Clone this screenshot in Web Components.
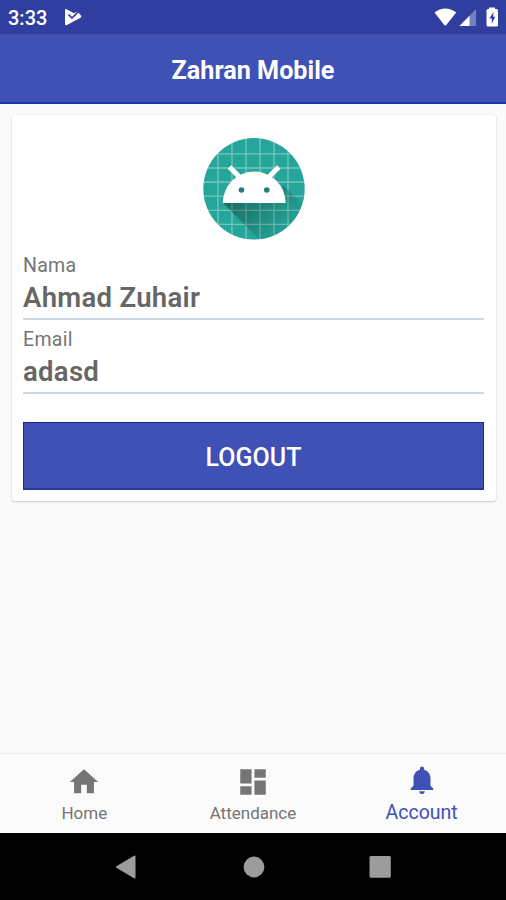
<!DOCTYPE html>
<html lang="id">
<head>
    <meta charset="UTF-8">
    <meta name="viewport" content="width=device-width, initial-scale=1.0">
    <title>Zahran Mobile</title>
    <style>
        body {
            margin: 0;
            font-family: Roboto, "Liberation Sans", sans-serif;
            --primary: #4051b5;
            --primary-dark: #303f9f;
            --surface: #fafafa;
        }
    </style>
</head>
<body>
    <m-screen>
        <m-status-bar slot="top" time="3:33"></m-status-bar>
        <m-toolbar slot="top">Zahran Mobile</m-toolbar>
        <m-card>
            <m-avatar></m-avatar>
            <m-field label="Nama">Ahmad Zuhair</m-field>
            <m-field label="Email">adasd</m-field>
            <m-button>LOGOUT</m-button>
        </m-card>
        <m-tabs slot="bottom">
            <m-tab icon="home">Home</m-tab>
            <m-tab icon="dashboard">Attendance</m-tab>
            <m-tab icon="bell" active>Account</m-tab>
        </m-tabs>
        <m-system-nav slot="bottom"></m-system-nav>
    </m-screen>
    <script>
        class Base extends HTMLElement {
            constructor(...args) {
                super(...args)

                this.attachShadow({ mode: 'open' })
                this.shadowRoot.innerHTML = this.render()
            }
            render() {
                return '<slot></slot>'
            }
        }

        self.customElements.define('m-screen', class Screen extends Base {
            render() {
                return /* HTML */`
                    <style>
                        :host {
                            display: flex;
                            flex-direction: column;
                            height: 900px;
                            background: var(--surface);
                            overflow: hidden;
                        }
                        main {
                            flex: 1;
                            padding: 11px 10.5px 0 11.5px;
                        }
                    </style>
                    <slot name="top"></slot>
                    <main><slot></slot></main>
                    <slot name="bottom"></slot>
                `
            }
        })

        self.customElements.define('m-status-bar', class StatusBar extends Base {
            render() {
                return /* HTML */`
                    <style>
                        :host {
                            display: flex;
                            align-items: center;
                            box-sizing: border-box;
                            height: 34px;
                            padding: 0 7px 0 8px;
                            background: var(--primary-dark);
                            color: #fff;
                            font-size: 20px;
                            font-weight: 500;
                        }
                        svg {
                            display: block;
                        }
                        span {
                            padding-top: 2px;
                        }
                        .note {
                            margin-left: 16px;
                            flex: 1;
                        }
                    </style>
                    <span>${this.getAttribute('time')}</span>
                    <div class="note">
                        <svg width="20" height="20" viewBox="0 0 20 20">
                            <path fill="#fff" d="M2 3Q2 1.500 3.500 2.300L11 6.200L14.500 4.500L18.300 9Q18.500 10 17.500 10.700L3.500 18.200Q2 18.700 2 17.200Z"/>
                            <path fill="none" stroke="#303f9f" stroke-width="1.700" d="M5.500 7.500L9 11L16.500 3.500"/>
                        </svg>
                    </div>
                    <svg width="65" height="34" viewBox="434 0 65 34">
                        <path fill="#fff" d="M434.500 12.500Q445.300 4.500 456.200 12.500L446.300 25Q445.300 26 444.300 25Z"/>
                        <path fill="#7680c0" d="M476 9V26H459.500Z"/>
                        <path fill="#fff" d="M469.500 15.700V26H459.500Z"/>
                        <path fill="#fff" d="M489 9V7.500H495V9H496.500Q498 9 498 10.500V25Q498 26.500 496.500 26.500H488Q486.500 26.500 486.500 25V10.500Q486.500 9 488 9Z"/>
                        <path fill="#303f9f" d="M493.500 12L489.500 18.500H491.800V23.500L495.300 16.800H493.200Z"/>
                    </svg>
                `
            }
        })

        self.customElements.define('m-toolbar', class Toolbar extends Base {
            render() {
                return /* HTML */`
                    <style>
                        :host {
                            display: flex;
                            align-items: center;
                            justify-content: center;
                            box-sizing: border-box;
                            height: 70px;
                            padding-top: 5px;
                            border-bottom: 2px solid #1a33aa;
                            background: var(--primary);
                            color: #fff;
                            font-size: 25.2px;
                            font-weight: 700;
                        }
                    </style>
                    <slot></slot>
                `
            }
        })

        self.customElements.define('m-card', class Card extends Base {
            render() {
                return /* HTML */`
                    <style>
                        :host {
                            display: flex;
                            flex-direction: column;
                            box-sizing: border-box;
                            height: 386px;
                            padding: 22px 11.5px 11px;
                            border-radius: 3px;
                            background: #fff;
                            box-shadow: 0 1px 2px rgba(0, 0, 0, .17), 0 0 2px rgba(0, 0, 0, .1);
                        }
                    </style>
                    <slot></slot>
                `
            }
        })

        self.customElements.define('m-avatar', class Avatar extends Base {
            render() {
                return /* HTML */`
                    <style>
                        :host {
                            display: flex;
                            justify-content: center;
                            height: 109px;
                        }
                    </style>
                    <svg width="102" height="103" viewBox="0 0 102 103">
                        <defs>
                            <clipPath id="disc"><circle cx="51" cy="51.800" r="50.700"/></clipPath>
                            <linearGradient id="shade" gradientUnits="userSpaceOnUse" x1="38" y1="52" x2="76" y2="92">
                                <stop offset="0" stop-color="#000" stop-opacity=".34"/>
                                <stop offset="1" stop-color="#000" stop-opacity=".06"/>
                            </linearGradient>
                        </defs>
                        <g clip-path="url(#disc)">
                            <rect width="102" height="103" fill="#26a69a"/>
                            <path fill="none" stroke="#fff" stroke-opacity=".36" stroke-width="1.300" d="M15 0V103M29 0V103M43 0V103M57 0V103M71 0V103M85 0V103M0 16.800H102M0 31H102M0 45H102M0 59.200H102M0 73.300H102M0 87.400H102"/>
                            <path fill="url(#shade)" d="M20 66L60 106H120V88L79 47L82 66Z"/>
                        </g>
                        <path stroke="#fff" stroke-width="5" d="M26.500 30L37 40.500M75.800 30L65.300 40.500"/>
                        <path fill="#fff" d="M19.800 66A31.400 31.400 0 0 1 82.600 66Z"/>
                        <circle cx="38.500" cy="53" r="2.800" fill="#247d76"/>
                        <circle cx="63.800" cy="53" r="2.800" fill="#247d76"/>
                    </svg>
                `
            }
        })

        self.customElements.define('m-field', class Field extends Base {
            render() {
                return /* HTML */`
                    <style>
                        :host {
                            display: flex;
                            flex-direction: column;
                            box-sizing: border-box;
                            height: 74px;
                            padding-top: 4px;
                            border-bottom: 2px solid #d0d5e2;
                            color: #666;
                        }
                        label {
                            height: 31px;
                            line-height: 31px;
                            font-size: 19.5px;
                            letter-spacing: .3px;
                            color: #757575;
                        }
                        b {
                            line-height: 34px;
                            font-size: 27.5px;
                            font-weight: 600;
                            letter-spacing: .3px;
                        }
                    </style>
                    <label>${this.getAttribute('label')}</label>
                    <b><slot></slot></b>
                `
            }
        })

        self.customElements.define('m-button', class Button extends Base {
            render() {
                return /* HTML */`
                    <style>
                        :host {
                            display: block;
                            margin-top: auto;
                        }
                        button {
                            display: block;
                            width: 100%;
                            height: 68px;
                            padding: 3px 0 0;
                            border: 1px solid #1a2799;
                            border-bottom: 2px solid #263b9d;
                            background: var(--primary);
                            color: #fff;
                            font: 500 25px Roboto, sans-serif;
                        }
                    </style>
                    <button><slot></slot></button>
                `
            }
        })

        self.customElements.define('m-tabs', class Tabs extends Base {
            render() {
                return /* HTML */`
                    <style>
                        :host {
                            display: grid;
                            grid-template-columns: repeat(3, 1fr);
                            box-sizing: border-box;
                            height: 80px;
                            border-top: 1px solid #ececec;
                            background: #fbfbfb;
                        }
                    </style>
                    <slot></slot>
                `
            }
        })

        const icons = {
            home: 'M10 20v-6h4v6h5v-8h3L12 3 2 12h3v8z',
            dashboard: 'M3 13h8V3H3v10zm0 8h8v-6H3v6zm10 0h8V11h-8v10zm0-18v6h8V3h-8z',
            bell: 'M12 22c1.1 0 2-.9 2-2h-4c0 1.1.89 2 2 2zm6-6v-5c0-3.07-1.64-5.64-4.5-6.32V4c0-.83-.67-1.5-1.5-1.5s-1.5.67-1.5 1.5v.68C7.63 5.36 6 7.92 6 11v5l-2 2v1h16v-1l-2-2z'
        }

        self.customElements.define('m-tab', class Tab extends Base {
            render() {
                return /* HTML */`
                    <style>
                        :host {
                            display: flex;
                            flex-direction: column;
                            align-items: center;
                            padding-top: 11px;
                            color: #757575;
                            font-size: 17px;
                        }
                        :host([active]) {
                            padding-top: 9px;
                            color: var(--primary);
                            font-size: 19.5px;
                        }
                        svg {
                            width: 34px;
                            height: 34px;
                            fill: currentColor;
                        }
                        span {
                            line-height: 28px;
                        }
                        :host([active]) span {
                            line-height: 32px;
                        }
                    </style>
                    <svg viewBox="0 0 24 24"><path d="${icons[this.getAttribute('icon')]}"/></svg>
                    <span><slot></slot></span>
                `
            }
        })

        self.customElements.define('m-system-nav', class SystemNav extends Base {
            render() {
                return /* HTML */`
                    <style>
                        :host {
                            display: flex;
                            justify-content: center;
                            align-items: center;
                            gap: 104.5px;
                            height: 67px;
                            padding-left: 1px;
                            background: #000;
                        }
                        svg {
                            width: 22px;
                            height: 24px;
                            fill: #9c9c9c;
                        }
                    </style>
                    <svg viewBox="0 0 22 24"><path d="M-1 12L18 .8Q19.500 .2 19.500 1.500V22.500Q19.500 23.800 18 23.200Z" overflow="visible"/></svg>
                    <svg viewBox="0 0 22 24"><circle cx="11" cy="12" r="10.400"/></svg>
                    <svg viewBox="0 0 22 24"><rect x="0.500" y="1" width="21.300" height="21.800" rx="1.500"/></svg>
                `
            }
        })
    </script>
</body>
</html>
